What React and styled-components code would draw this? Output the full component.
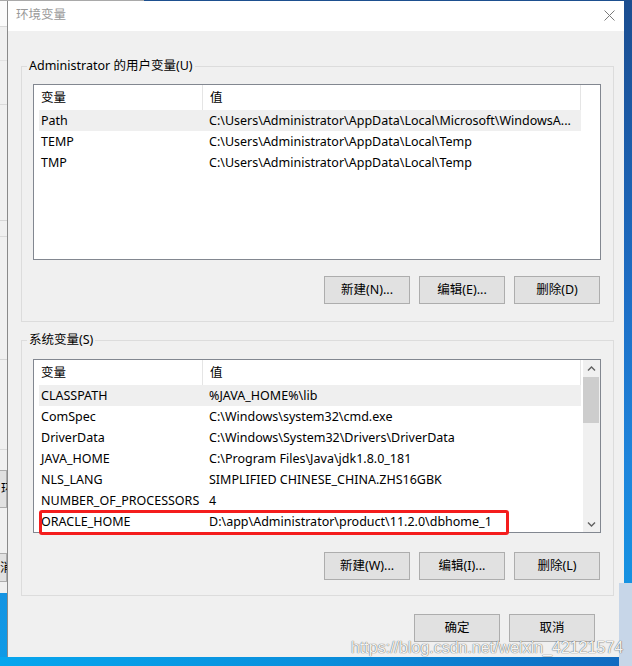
import styled, { createGlobalStyle } from 'styled-components'

const GlobalStyle = createGlobalStyle`
  html, body {
    margin: 0;
    padding: 0;
  }

  body {
    width: 632px;
    height: 666px;
    overflow: hidden;
    font-family: "Noto Sans", "Noto Sans CJK SC", sans-serif;
    font-size: 12.5px;
    color: #000;
  }
`

const Screen = styled.div`
  position: relative;
  width: 632px;
  height: 666px;
  overflow: hidden;
  display: flex;
  flex-direction: column;
  background: linear-gradient(to bottom, #1b4d90 0%, #1e6fc6 45%, #1f86dc 70%, #0e9be6 100%);
`

//Thin edge of whatever sits above the dialog
const TopEdge = styled.div`
  flex: none;
  height: 1px;
  background: linear-gradient(to right, #a9a9a9 0, #a9a9a9 144px, #1d4f8f 144px);
`

const Stage = styled.div`
  flex: none;
  height: 656px;
  display: flex;
  align-items: flex-start;
`

const BottomEdge = styled.div`
  flex: 1;
  background: linear-gradient(to right, #07a6ee 0%, #0a8fdc 50%, #1169bf 100%);
`

//Sliver of the System Properties window behind the dialog
const BackWindow = styled.div`
  flex: none;
  width: 7px;
  height: 592px;
  overflow: hidden;
  display: flex;
  flex-direction: column;
  background: #f0f0f0;
`

const BackSegment = styled.div`
  flex: none;
  height: ${props => props.$h}px;
  box-sizing: border-box;
  background: ${props => props.$bg || '#f0f0f0'};
  border-bottom: 1px solid ${props => props.$line || 'transparent'};
`

const BackButton = styled.div`
  flex: none;
  height: ${props => props.$h}px;
  box-sizing: border-box;
  background: #e1e1e1;
  border: 1px solid #adadad;
  border-left: none;
  padding-left: ${props => props.$indent}px;
  line-height: ${props => props.$h - 2}px;
  white-space: nowrap;
`

const Dialog = styled.div`
  flex: none;
  width: 617px;
  height: 656px;
  box-sizing: border-box;
  border-left: 1px solid #8a8a8a;
  background: #f0f0f0;
  display: flex;
  flex-direction: column;
`

const TitleBar = styled.div`
  flex: none;
  height: 30px;
  background: #fff;
  display: flex;
  align-items: flex-start;
  justify-content: space-between;
  padding: 6px 9px 0 8px;
  box-sizing: border-box;

  .title {
    color: #999;
    line-height: 16px;
  }

  svg {
    margin-top: 3px;
  }
`

const Body = styled.div`
  flex: 1;
  display: flex;
  flex-direction: column;
  padding: 27px 10px 0 13px;
`

const GroupBox = styled.fieldset`
  margin: ${props => props.$top}px 0 0 0;
  padding: ${props => props.$padTop}px 12px ${props => props.$padBottom}px 11px;
  border: 1px solid #dcdcdc;
  min-width: 0;
  display: flex;
  flex-direction: column;

  legend {
    padding: 0 2px;
    margin-left: -6px;
    line-height: 16px;
  }
`

const ListBox = styled.div`
  height: ${props => props.$h}px;
  box-sizing: border-box;
  border: 1px solid #828790;
  background: #fff;
  display: flex;
`

const ListContent = styled.div`
  flex: 1;
  min-width: 0;
  display: flex;
  flex-direction: column;
`

const Header = styled.div`
  flex: none;
  height: 25px;
  display: grid;
  grid-template-columns: 169px 378px;

  div {
    padding-left: 7px;
    line-height: 25px;
    border-right: 1px solid #e5e5e5;
  }
`

const Row = styled.div`
  position: relative;
  flex: none;
  height: 21px;
  width: 542px;
  margin-left: 5px;
  display: grid;
  grid-template-columns: 163px 1fr;
  line-height: 21px;
  white-space: nowrap;
  background: ${props => props.$selected ? '#efefef' : 'transparent'};

  .name {
    padding-left: 2px;
    overflow: hidden;
  }

  .value {
    padding-left: 7px;
    overflow: hidden;
  }
`

//Red annotation box drawn over the ORACLE_HOME row
const Marker = styled.div`
  position: absolute;
  left: 0;
  top: -1px;
  width: 470px;
  height: 25px;
  box-sizing: border-box;
  border: 3px solid #f41d1d;
  border-radius: 3px;
  pointer-events: none;
`

const ScrollBar = styled.div`
  flex: none;
  width: 17px;
  background: #f0f0f0;
  display: flex;
  flex-direction: column;
`

const ScrollArrow = styled.div`
  flex: none;
  height: 17px;
  display: flex;
  align-items: center;
  justify-content: center;
`

const ScrollTrack = styled.div`
  flex: 1;
`

const ScrollThumb = styled.div`
  height: 46px;
  margin-right: 1px;
  background: #cdcdcd;
`

const ButtonRow = styled.div`
  display: flex;
  justify-content: flex-end;
  gap: 9px;
  margin-top: ${props => props.$top}px;
  margin-right: ${props => props.$right || 0}px;
`

const Button = styled.button`
  width: 86px;
  height: 28px;
  padding: 0;
  box-sizing: border-box;
  background: #e1e1e1;
  border: 1px solid #adadad;
  border-radius: 0;
  font: inherit;
  color: #000;
  line-height: 26px;
`

const Watermark = styled.div`
  position: absolute;
  left: 351px;
  top: 638px;
  font-family: "Liberation Sans", Arial, sans-serif;
  font-size: 16px;
  line-height: 20px;
  color: rgba(255, 255, 255, 0.95);
  text-shadow: 0 0 1px rgba(0, 0, 0, 0.55), 0 0 1px rgba(0, 0, 0, 0.45);
  white-space: nowrap;
`

const DesktopTile = styled.div`
  position: absolute;
  left: 619px;
  top: 583px;
  width: 13px;
  height: 83px;
  background: #c7d6e8;
`

const userVars = [
  ['Path', 'C:\\Users\\Administrator\\AppData\\Local\\Microsoft\\WindowsA...'],
  ['TEMP', 'C:\\Users\\Administrator\\AppData\\Local\\Temp'],
  ['TMP', 'C:\\Users\\Administrator\\AppData\\Local\\Temp'],
]

const systemVars = [
  ['CLASSPATH', '%JAVA_HOME%\\lib'],
  ['ComSpec', 'C:\\Windows\\system32\\cmd.exe'],
  ['DriverData', 'C:\\Windows\\System32\\Drivers\\DriverData'],
  ['JAVA_HOME', 'C:\\Program Files\\Java\\jdk1.8.0_181'],
  ['NLS_LANG', 'SIMPLIFIED CHINESE_CHINA.ZHS16GBK'],
  ['NUMBER_OF_PROCESSORS', '4'],
  ['ORACLE_HOME', 'D:\\app\\Administrator\\product\\11.2.0\\dbhome_1'],
]

const backSegments = [
  { h: 26, bg: '#fbfbfb', line: '#d9d9d9' },
  { h: 34, line: '#e2e2e2' },
  { h: 44, line: '#dadada' },
  { h: 116, line: '#d6d6d6' },
  { h: 16, line: '#dadada' },
  { h: 123, line: '#d6d6d6' },
  { h: 90, line: '#dadada' },
]

const Chevron = ({down}) => (
  <svg width="9" height="6" viewBox="0 0 9 6">
    <path
      d={down ? 'M1 1.5 L4.5 5 L8 1.5' : 'M1 4.5 L4.5 1 L8 4.5'}
      fill="none"
      stroke="#606060"
      strokeWidth="1.4"
    />
  </svg>
)

const VarList = ({vars, height, scroll, marked}) => (
  <ListBox $h={height}>
    <ListContent>
      <Header>
        <div>变量</div>
        <div>值</div>
      </Header>
      {vars.map(([name, value], i) =>
        <Row key={name} $selected={i === 0}>
          <div className='name'>{name}</div>
          <div className='value'>{value}</div>
          {name === marked && <Marker />}
        </Row>)}
    </ListContent>
    {scroll &&
      <ScrollBar>
        <ScrollArrow><Chevron /></ScrollArrow>
        <ScrollTrack>
          <ScrollThumb />
        </ScrollTrack>
        <ScrollArrow><Chevron down /></ScrollArrow>
      </ScrollBar>}
  </ListBox>
)

const App = () => {
  return (
    <Screen>
      <GlobalStyle />
      <TopEdge />
      <Stage>
        <BackWindow>
          {backSegments.map((s, i) =>
            <BackSegment key={i} $h={s.h} $bg={s.bg} $line={s.line} />)}
          <BackSegment $h={20} />
          <BackButton $h={38} $indent={1}>环</BackButton>
          <BackSegment $h={45} />
          <BackButton $h={29} $indent={0}>消</BackButton>
          <BackSegment $h={10} />
        </BackWindow>

        <Dialog>
          <TitleBar>
            <span className='title'>环境变量</span>
            <svg width="11" height="11" viewBox="0 0 11 11">
              <path d="M0.5 0.5 L10.5 10.5 M10.5 0.5 L0.5 10.5" stroke="#7a7a7a" strokeWidth="1" />
            </svg>
          </TitleBar>

          <Body>
            <GroupBox $top={0} $padTop={10} $padBottom={17}>
              <legend>Administrator 的用户变量(U)</legend>
              <VarList vars={userVars} height={176} />
              <ButtonRow $top={16} $right={1}>
                <Button>新建(N)...</Button>
                <Button>编辑(E)...</Button>
                <Button>删除(D)</Button>
              </ButtonRow>
            </GroupBox>

            <GroupBox $top={10} $padTop={11} $padBottom={15}>
              <legend>系统变量(S)</legend>
              <VarList vars={systemVars} height={174} scroll marked='ORACLE_HOME' />
              <ButtonRow $top={19} $right={1}>
                <Button>新建(W)...</Button>
                <Button>编辑(I)...</Button>
                <Button>删除(L)</Button>
              </ButtonRow>
            </GroupBox>

            <ButtonRow $top={18} $right={19}>
              <Button>确定</Button>
              <Button>取消</Button>
            </ButtonRow>
          </Body>
        </Dialog>
      </Stage>
      <BottomEdge />

      <DesktopTile />
      <Watermark>https://blog.csdn.net/weixin_42121574</Watermark>
    </Screen>
  )
}

export default App
